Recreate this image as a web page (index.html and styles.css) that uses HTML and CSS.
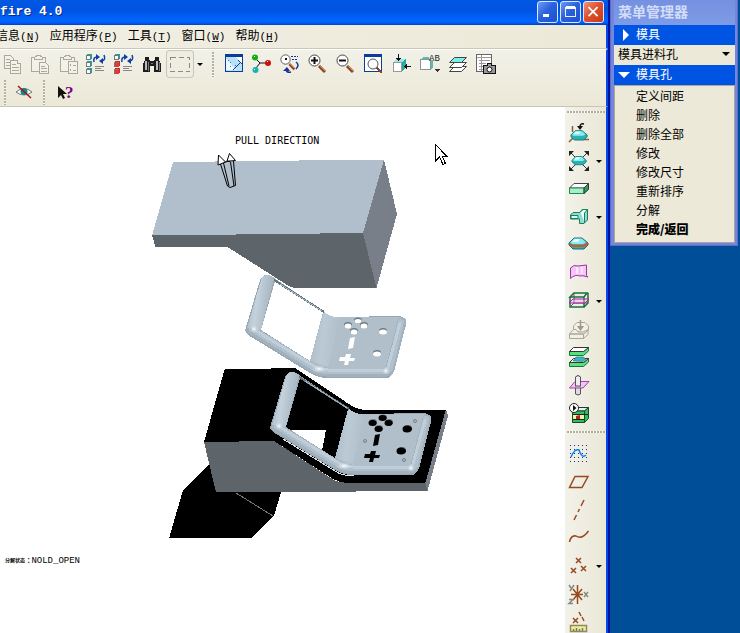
FILE: index.html
```html
<!DOCTYPE html>
<html lang="zh-CN">
<head>
<meta charset="utf-8">
<title>fire 4.0</title>
<link rel="stylesheet" href="styles.css">
</head>
<body>
<svg class="defs" aria-hidden="true">
  <defs>
    <linearGradient id="bar" x1="0" y1="0" x2="1" y2="0.25"><stop offset="0" stop-color="#9fb0bc"/><stop offset=".45" stop-color="#c3d2dc"/><stop offset="1" stop-color="#a3b3bf"/></linearGradient>
    <linearGradient id="fold" x1="0" y1="0" x2="1" y2="0.2"><stop offset="0" stop-color="#a9b8c3"/><stop offset=".5" stop-color="#bccad5"/><stop offset="1" stop-color="#b1bfcb"/></linearGradient>
    <radialGradient id="glow"><stop offset="0" stop-color="#fff"/><stop offset="1" stop-color="#c3d2dc" stop-opacity="0"/></radialGradient>
    <g id="shell">
      <path fill="#98a7b2" fill-rule="evenodd" d="M267 275Q272 275 274 278L323 311Q330 317 337 317L400 316Q407 318 406 325L393 372Q391 378 386 378L327 378Q318 378 310 373L248 335Q244 332 246 327L260 280Q262 275 267 275ZM275 281L261 330L310 361L323 312Z"/>
      <path fill="#b1bfcb" d="M323 312Q330 317 337 317L400 317Q405 318 405 324L392 370Q390 376 386 376H326Q318 376 310 371L310 361Z"/>
      <path fill="url(#fold)" d="M324 312Q331 317 340 318L328 367L310 361Z"/>
      <path fill="none" stroke="#a2b2bd" stroke-width="9" stroke-linecap="round" stroke-linejoin="round" d="M266.500 280L251 330L313 368Q319 372 327 372H386Q389 372 390 369L402 322"/>
      <path fill="none" stroke="#b1c0cc" stroke-width="6" stroke-linecap="round" stroke-linejoin="round" d="M267 280L252 329L313 367Q320 371 327 371H386Q389 371 390 368L401 322"/>
      <path fill="none" stroke="#bfced8" stroke-width="3" stroke-linecap="round" stroke-linejoin="round" d="M267 281L253 329L314 366Q321 370 328 370H386L388 367L400 323"/>
      <path fill="url(#bar)" d="M261 280Q263 275 267 275Q272 275 274 279L261 330L247 328Z"/>
      <path stroke="#647078" stroke-width="2" d="M274 280L324 312"/><path stroke="#a4b2bd" d="M280 284L322 311"/>
      <ellipse cx="254" cy="329" rx="4" ry="4" fill="url(#glow)"/><ellipse cx="319" cy="369" rx="8" ry="4" fill="url(#glow)"/><circle cx="386" cy="371" r="4" fill="url(#glow)"/>
      <g class="smooth" fill="#6d7981" transform="translate(0 -1)"><ellipse cx="358" cy="321" rx="4" ry="2.500"/><ellipse cx="348" cy="326" rx="4" ry="3"/><ellipse cx="364" cy="326" rx="4" ry="3"/><ellipse cx="354" cy="332" rx="4" ry="3"/><ellipse cx="383" cy="332" rx="4" ry="3"/><ellipse cx="377" cy="354" rx="4" ry="3"/></g>
      <g class="smooth" fill="currentColor"><ellipse cx="358" cy="321" rx="3.500" ry="2"/><ellipse cx="348" cy="326" rx="3.500" ry="2.500"/><ellipse cx="364" cy="326" rx="3.500" ry="2.500"/><ellipse cx="354" cy="332" rx="3.500" ry="2.500"/><ellipse cx="383" cy="332" rx="4" ry="2.500"/><ellipse cx="377" cy="354" rx="4" ry="2.500"/><path d="M350 338L355 337L353 348L348 349ZM346 354H351L350 358H355L354 361H349L348 365H344L345 361H339L340 357H345Z"/></g>
    </g>
    <g id="cube"><path fill="#f5fbfb" stroke="#777" d="M.5 1.500H4.500V5.500H.5Z"/><path fill="none" stroke="currentColor" d="M1 .5H5.500V5"/></g>
    <g id="cycle" class="smooth" fill="none" stroke="#0c3fa6" stroke-width="1.500"><path d="M1 9Q0 4 4 4M11 2Q13 7 9 8"/><path fill="#0c3fa6" stroke="none" d="M3 1L7 4L3 7ZM10 5L6 8L10 11Z"/></g>
    <g id="lens"><path stroke="#8a4522" stroke-width="3" d="M11 12L17 18"/><path stroke="#c98a62" d="M11 11L17 17"/><circle cx="6.500" cy="6.500" r="5.500" fill="#fff" stroke="#444"/></g>
    <g id="gem"><path fill="#26b3b3" stroke="#176a70" d="M0 7L5 2H13L19 7V9L15 13H4L0 9Z"/><path fill="#8eeaf0" d="M1 7L5 2.500H13L17 6.500L14 8H3Z"/><path fill="#d9ffff" d="M6 3H11L9 6H3Z"/></g>
  </defs>
</svg>

<main class="app">
  <header class="titlebar">
    <h1>fire 4.0</h1>
    <button class="cap" aria-label="最小化"><svg viewBox="0 0 21 21"><path fill="#fff" d="M5 13H12V16H5Z"/></svg></button>
    <button class="cap" aria-label="最大化"><svg viewBox="0 0 21 21"><path fill="none" stroke="#fff" d="M5.500 5V15.500H15.500V5"/><path fill="#fff" d="M5 4H16V7H5Z"/></svg></button>
    <button class="cap close" aria-label="关闭"><svg class="smooth" viewBox="0 0 21 21"><path stroke="#fff" stroke-width="2" d="M5 5L15 15M15 5L5 15"/></svg></button>
  </header>

  <nav class="menubar">
    <button>信息<span>(<u>N</u>)</span></button>
    <button>应用程序<span>(<u>P</u>)</span></button>
    <button>工具<span>(<u>T</u>)</span></button>
    <button>窗口<span>(<u>W</u>)</span></button>
    <button>帮助<span>(<u>H</u>)</span></button>
  </nav>

  <div class="toolbars">
    <div class="tools first">
      <button class="tool" aria-label="复制"><svg viewBox="-2 50 28 28"><g fill="#f4f2e8" stroke="#aca899"><path d="M4.500 55.500H10.500L13.500 58.500V68.500H4.500Z"/><path d="M10.500 60.500H17.500L20.500 63.500V73.500H10.500Z"/><path d="M6 59.500H10M6 62.500H10M6 65.500H10M12 64.500H16M12 67.500H19M12 70.500H19M17.500 60V63.500H21"/></g></svg></button>
      <button class="tool" aria-label="粘贴"><svg viewBox="26 50 28 28"><g fill="#f4f2e8" stroke="#aca899"><path d="M31.500 57.500H45.500V71.500H31.500Z"/><path d="M34.500 59.500V57.500L37 55.500H40L42.500 57.500V59.500Z"/><path d="M39.500 62.500H45.500L48.500 65.500V73.500H39.500ZM41 66.500H45M41 68.500H47M41 71.500H47"/></g></svg></button>
      <button class="tool" aria-label="选择性粘贴"><svg viewBox="54 50 28 28"><g fill="#f4f2e8" stroke="#aca899"><path d="M60.500 57.500H74.500V71.500H60.500Z"/><path d="M63.500 59.500V57.500L66 55.500H69L71.500 57.500V59.500Z"/><path d="M68.500 61.500H77.500V73.500H68.500ZM70.500 64V66M70.500 69V71M73 65.500H76M73 70.500H76"/></g></svg></button>
      <button class="tool" aria-label="再生"><svg viewBox="82 50 28 28"><g color="#15a2a2"><use href="#cube" x="86" y="54"/><use href="#cube" x="86" y="61"/><use href="#cube" x="86" y="68"/></g><use href="#cycle" x="93" y="53"/><path stroke="#888" d="M95 66.500H104M95 68.500H101M95 70.500H104"/></svg></button>
      <button class="tool" aria-label="再生管理器"><svg viewBox="110 50 28 28"><use href="#cube" x="114" y="54" color="#15a2a2"/><g color="#d22"><use href="#cube" x="114" y="61"/><use href="#cube" x="114" y="68"/><path fill="#e33" d="M115 63H119V67H115ZM115 70H119V74H115Z"/></g><use href="#cycle" x="121" y="53"/><path stroke="#888" d="M123 66.500H132M123 68.500H129M123 70.500H132"/></svg></button>
      <button class="tool" aria-label="查找"><svg viewBox="138 50 28 28"><path fill="#1d1d1d" d="M145 57H149V60L151 61H153L155 60V57H159V60L161 64V72H154V66H150V72H143V64L145 60Z"/><path stroke="#bbb" stroke-width="2" d="M146 61V70M157 61V70"/><path stroke="#777" d="M148.500 62V71M159.500 62V71M151 63.500H153"/></svg></button>
      <button class="tool on" aria-label="选取框"><svg viewBox="166 50 28 28"><path fill="none" stroke="#8d8a80" stroke-dasharray="5 3" d="M170.500 57.500H189.500V71.500H170.500Z"/></svg></button>
      <button class="fly" aria-label="选取选项"></button>
      <i class="grip"></i>
      <button class="tool" aria-label="重画"><svg viewBox="220 50 28 28"><path fill="#fff" stroke="#0a3c9c" d="M225.500 54.500H242.500V71.500H225.500Z"/><path fill="#0a3c9c" d="M225 54H243V57H225Z"/><path fill="#b9e0f5" d="M226 57H235L242 64V71H226Z"/><path fill="#eefaff" d="M226 58L236 70H226Z"/><path stroke="#246fc0" stroke-dasharray="1 2" d="M228 60L237 67M230 66L235 69"/><path stroke="#0a3c9c" d="M240 63L233 70M238 60L242 64"/></svg></button>
      <button class="tool" aria-label="旋转中心"><svg class="smooth" viewBox="248 50 28 28"><path fill="none" stroke="#111" d="M256 59L260 63H267M260 63L256 68"/><circle cx="255" cy="57.500" r="3" fill="#10b010"/><circle cx="268" cy="63" r="3" fill="#d01010"/><circle cx="255.500" cy="70" r="3" fill="#18b4b4"/><path fill="#fff" d="M254 56h1v1h-1zM267 61h1v1h-1zM254 69h1v1h-1z"/></svg></button>
      <button class="tool" aria-label="定向模式"><svg class="smooth" viewBox="276 50 28 28"><use href="#lens" transform="translate(280 54) scale(.85)"/><path stroke="#1b2f9c" stroke-dasharray="2 1" d="M291 56.500H298M292 59.500H298"/><path fill="none" stroke="#1b2f9c" stroke-width="1.500" d="M296 62Q300 65 296 69M291 72Q286 73 286 69"/><path fill="#1b2f9c" d="M283 71L287 67L290 71Z"/><path fill="#111" d="M285 58h2v2h-2z"/></svg></button>
      <button class="tool" aria-label="放大"><svg class="smooth" viewBox="304 50 28 28"><use href="#lens" x="308" y="54"/><path stroke="#111" stroke-width="2" d="M311 60.500H318M314.500 57V64"/></svg></button>
      <button class="tool" aria-label="缩小"><svg class="smooth" viewBox="332 50 28 28"><use href="#lens" x="336" y="54"/><path stroke="#111" stroke-width="2" d="M339 60.500H346"/></svg></button>
      <button class="tool" aria-label="重新调整"><svg viewBox="360 50 28 28"><path fill="#fff" stroke="#0a3c9c" d="M364.500 54.500H381.500V71.500H364.500Z"/><path fill="#0a3c9c" d="M364 54H382V57H364Z"/><path stroke="#8a4522" stroke-width="2" d="M376 67L382 73"/><circle class="smooth" cx="373" cy="64" r="5" fill="#fff" stroke="#555"/></svg></button>
      <button class="tool" aria-label="重定向"><svg viewBox="388 50 28 28"><path fill="#25aaa6" d="M396 59H405L402 62V71L406 68V59Z"/><path fill="#9de7e6" d="M396 59H405L402 63H393Z"/><path fill="#fff" stroke="#999" d="M393.500 62.500H401.500V71.500H393.500Z"/><path stroke="#111" d="M398.500 54V60M405 66.500H411"/><path fill="#111" d="M396 58H401L398.500 61ZM407 64V69L404 66.500Z"/></svg></button>
      <button class="tool" aria-label="保存的视图列表"><svg viewBox="416 50 28 28"><path fill="#54bcb9" d="M420 60L423 57H429V60ZM430 60L433 60V67L430 70Z"/><path fill="#fff" stroke="#8e9494" d="M420.500 59.500H430.500V69.500H420.500Z"/><text x="429" y="61" class="ab">AB</text><path fill="#333" d="M435 69H440L437.500 72Z"/></svg></button>
      <button class="tool" aria-label="图层"><svg class="smooth" viewBox="444 50 28 28"><g stroke="#444"><path fill="#fff" d="M449.500 71.500L454.500 66.500H466.500L461.500 71.500Z"/><path fill="#fff" d="M449.500 67.500L454.500 62.500H466.500L461.500 67.500Z"/><path fill="#7beeea" d="M449.500 62.500L454.500 57.500H466.500L461.500 62.500Z"/></g></svg></button>
      <button class="tool" aria-label="视图管理器"><svg viewBox="472 50 28 28"><path fill="#fff" stroke="#666" d="M476.500 54.500H491.500V71.500H476.500Z"/><path stroke="#999" d="M477 57.500H491M479 60.500H490M479 63.500H486M479 66.500H484M479 69.500H484M481.500 55V71"/><path fill="#999" stroke="#111" d="M483.500 65.500H487L488 63.500H491L492 65.500H495.500V73.500H483.500Z"/><circle class="smooth" cx="489.500" cy="69.500" r="2.500" fill="#fff" stroke="#111"/></svg></button>
    </div>
    <div class="tools second">
      <i class="grip"></i>
      <button class="tool" aria-label="遮蔽"><svg class="smooth" viewBox="11 78 28 28"><path fill="#fff" stroke="#777" d="M16 92Q24 85 32 92Q24 98 16 92Z"/><circle cx="24" cy="91.500" r="3.500" fill="#13878c"/><path stroke="#a01818" stroke-width="1.500" d="M18 86L31 98"/></svg></button>
      <i class="grip"></i>
      <button class="tool" aria-label="上下文帮助"><svg class="smooth" viewBox="50 77 28 28"><path fill="#111" d="M58 85V97L61 94L63 98L65 97L63 93H67Z"/><text x="65" y="97" class="help">?</text></svg></button>
    </div>
  </div>

  <div class="work">
    <svg class="scene" viewBox="0 107 565 526" preserveAspectRatio="xMinYMin meet" role="img" aria-label="模具打开视图">
      <text x="235" y="144" class="note">PULL DIRECTION</text>
      <path fill="#b1becb" d="M173 162L384 159.500L363 233L152 235.500Z"/>
      <path fill="#787f89" d="M384 159.500L397 214L376.500 288L363 233Z"/>
      <path fill="#5e656a" d="M152 235.500L363 233L376.500 288H295Q289 287 284 283L227.500 247H155.500Z"/>
      <g class="smooth" fill="none" stroke="#000"><path d="M220.500 164L227.500 186L230 187.500L235.500 185.500L233.500 161M223.500 163L229 186M230.500 162L234 186M223 163L227 161.500H230"/><path fill="#fff" d="M218 165L218.500 155L225.500 162ZM227 161L229.500 153.500L235.500 160.500L230 161Z"/></g>
      <path fill="#fff" stroke="#000" d="M435.500 144.500V161L439.500 157L443 164.500L445.500 163.500L442 156H446.500Z"/>
      <use href="#shell" color="#fff"/>
      <path fill="#000" d="M209 465L183 490L169 538.500L252 537.500L274 516L281 492Z"/>
      <path stroke="#777" d="M236 493L273 516"/>
      <path fill="#000" d="M224.500 369.500L295 368L348 403.500Q357 410 367 410L446 409.500L426 482.500H342L333 479L274 441L204 442Z"/>
      <path fill="#5e656a" d="M204 442L274 441L330 477.500Q337 482.500 344 482.500H426L427 491L216 492.500Z"/>
      <path fill="#787f89" d="M446 409L448 416L427.500 491L425.500 482.500Z"/>
      <path fill="#fff" d="M283 430H326L321.500 453L315 452Z"/>
      <path fill="none" stroke="#dde5ea" d="M283 439L335 471Q342 476 354 476"/>
      <use href="#shell" x="25" y="97" color="#000"/>
      <g class="smooth" fill="#000"><ellipse cx="382.500" cy="418" rx="4" ry="3"/><ellipse cx="372.500" cy="423" rx="4" ry="3"/><ellipse cx="388.500" cy="423" rx="4" ry="3"/><ellipse cx="378.500" cy="429" rx="4" ry="3"/><ellipse cx="407" cy="429" rx="4.500" ry="3.500"/><ellipse cx="401" cy="451" rx="4.500" ry="3.500"/></g>
      <g class="smooth" fill="none" stroke="#74818a"><circle cx="415" cy="421" r="1.500"/><circle cx="365" cy="441" r="1.500"/><circle cx="404" cy="460" r="1.500"/></g>
      <text x="5" y="562" class="state">分解状态</text><text x="26" y="563" class="statename">:NOLD_OPEN</text>
    </svg>

    <div class="rail">
      <i class="grip flat"></i>
      <button class="tool" aria-label="定位参照零件"><svg class="smooth" viewBox="565 119 28 28"><path stroke="#8d5b32" stroke-width="1.500" d="M572.500 126V132M569 142L574 137M583 139.500H589"/><use href="#gem" transform="translate(571 129) scale(.85)"/><path fill="none" stroke="#111" stroke-width="1.500" d="M584 124Q580 123 580 127"/><path fill="#111" d="M577 126H583L580 130Z"/></svg></button>
      <button class="tool" aria-label="按比例收缩"><svg class="smooth" viewBox="565 147 28 28"><path stroke="#333" d="M570 152L588 170M588 152L570 170"/><path fill="#222" d="M569 151H574L569 156ZM589 151V156L584 151ZM569 171V166L574 171ZM589 171H584L589 166Z"/><use href="#gem" transform="translate(572 155) scale(.75)"/></svg></button><button class="fly" aria-label="收缩选项"></button>
      <button class="tool" aria-label="自动工件"><svg class="smooth" viewBox="565 175 28 28"><path fill="#fff" stroke="#444" d="M569.500 188L574 183.500H588.500L584 188Z"/><path fill="#a5f0c4" stroke="#218b57" d="M569.500 188H584V193.500H569.500Z"/><path fill="#299e60" stroke="#333" d="M584 188L588.500 183.500V189.500L584 193.500Z"/></svg></button>
      <button class="tool" aria-label="体积块"><svg class="smooth" viewBox="565 203 28 28"><g stroke="#188055"><path fill="#8ddcd7" d="M570.500 215L573 212.500H580L582 209.500H587.500V220L584 223.500H579.500V219H570.500Z"/><path fill="#e4ffff" d="M580.500 212L583 209.500H587.500L584.500 213V223M571 215.500H578V218.500H571Z"/></g></svg></button><button class="fly" aria-label="体积块选项"></button>
      <button class="tool" aria-label="轮廓曲线"><svg class="smooth" viewBox="565 231 28 28"><use href="#gem" x="569" y="236"/><path fill="none" stroke="#f04818" stroke-width="2" d="M570 244L573 246H584L588 243"/></svg></button>
      <button class="tool" aria-label="分型面"><svg class="smooth" viewBox="565 259 28 28"><path fill="#f4c6f4" stroke="#a030b0" d="M570.500 278.500V268Q574 264 578 266L586.500 265V275.500L588 277Q582 275 580 276Q575 274 570.500 278.500Z"/><path stroke="#fbe8fb" stroke-width="2" d="M577 267V274M582 267V274"/></svg></button>
      <button class="tool" aria-label="分割体积块"><svg class="smooth" viewBox="565 287 28 28"><path fill="none" stroke="#15703c" stroke-width="1.500" d="M570 297L574 293H587L584 297ZM570 297V307H584V297M584 307L588 303V293"/><path fill="none" stroke="#555" d="M574 293V303H588M574 303L570 307"/><path fill="#e8b0e8" fill-opacity=".4" stroke="#b020b0" d="M569 303L573 299H589L585 303Z"/></svg></button><button class="fly" aria-label="分割选项"></button>
      <button class="tool" aria-label="型腔插入"><svg class="smooth" viewBox="565 315 28 28"><g fill="#f2f0e5" stroke="#aaa697"><path d="M573.500 331V326L577 322.500H585L588.500 326V330L585 333Z"/><path d="M569.500 334L573.500 329.500H576L578 332H583L588.500 329.500L583.500 334ZM569.500 334H583.500V338.500H569.500ZM583.500 338.500L588 334.500V330"/></g><path stroke="#9c998d" stroke-width="1.500" d="M580.500 320V329"/><path fill="#9c998d" d="M577 326H584L580.500 331Z"/></svg></button>
      <button class="tool" aria-label="模具开模"><svg class="smooth" viewBox="565 343 28 28"><path fill="#59df7b" stroke="#174" d="M569.500 351.500V355.500H583.500L588.500 351V347.500L583.500 351.500ZM569.500 362.500V366.500H583.500L588.500 362V358.500L583.500 362.500Z"/><path fill="#fff" stroke="#333" d="M569.500 351.500L573.500 347.500H588.500L583.500 351.500ZM569.500 362.500L573.500 358.500H588.500L583.500 362.500Z"/><path fill="#38b8bd" stroke="#246" stroke-width=".5" d="M573 361L576 357H583L586 359L583 361.500Z"/></svg></button>
      <button class="tool" aria-label="修剪到几何"><svg class="smooth" viewBox="565 371 28 28"><path fill="#ddd" stroke="#555" d="M575.500 377Q578 374 580.500 377V394Q578 396 575.500 394Z"/><path fill="#f0b5f2" fill-opacity=".7" stroke="#a83ab8" d="M569.500 388L575 381.500H589L583 388Z"/><path fill="#eee" stroke="#555" d="M575.500 377V386H580.500V377Q578 374 575.500 377Z"/></svg></button>
      <button class="tool" aria-label="开模分析"><svg class="smooth" viewBox="565 399 28 28"><path fill="#eee" stroke="#333" d="M572.500 411L576 407.500H588.500L584.500 411Z"/><path fill="#2dbf64" stroke="#154b2c" d="M572.500 411H584.500V422.500H572.500ZM584.500 411L588.500 407.500V418.500L584.500 422.500Z"/><path fill="#f4f29b" d="M573 414H584V419H573Z"/><path fill="#b52222" d="M576 419V416L580 415V419Z"/><path stroke="#222" d="M573 414.500H588M573 419.500H584"/><circle cx="574" cy="408" r="4.500" fill="#fff" stroke="#222"/><path fill="#111" d="M573 405V411L576.500 408Z"/></svg></button>
      <i class="grip flat"></i>
      <button class="tool" aria-label="草绘"><svg class="smooth" viewBox="565 440 28 28"><path stroke="#10338c" stroke-dasharray="1 3" d="M570 445.500H588M570 449.500H588M570 453.500H588M570 457.500H588M570 461.500H588"/><path fill="none" stroke="#0b83f0" stroke-width="1.500" d="M571 457Q575 448 579 450Q582 459 586 455"/></svg></button>
      <button class="tool" aria-label="基准平面"><svg class="smooth brown" viewBox="565 468 28 28"><path d="M569.500 487.500L575 476.500H588L582 487.500Z"/></svg></button>
      <button class="tool" aria-label="基准轴"><svg class="smooth brown" viewBox="565 496 28 28"><path d="M584 500L581 506M579.500 509L578 512M576.500 515L574 520"/></svg></button>
      <button class="tool" aria-label="基准曲线"><svg class="smooth brown" viewBox="565 524 28 28"><path d="M569.500 542Q571 535 576 536Q582 540 588.500 531"/></svg></button>
      <button class="tool" aria-label="基准点"><svg class="smooth brown" viewBox="565 552 28 28"><path d="M576 558L581 563M581 558L576 563M571 568L576 573M576 568L571 573M581 566L586 571M586 566L581 571"/></svg></button><button class="fly" aria-label="基准点选项"></button>
      <button class="tool" aria-label="坐标系"><svg class="smooth brown" viewBox="565 580 28 28"><path d="M577.500 585V604M571 594.500H583M573 589L582 600M582 589L573 600"/><path stroke="#888" d="M569 585L571 588M574 585L570 591M584 592L588 597M588 592L584 597M569 599.500H573L569 603.500H573"/></svg></button>
      <button class="tool" aria-label="分析"><svg class="smooth brown" viewBox="565 608 28 28"><path d="M573 618L578 623M578 618L573 623M579 612L581 616M582 617L584 621"/><path fill="#f1ed91" stroke="#8b8b62" d="M570.500 625.500H586.500V631.500H570.500Z"/><path stroke="#777" d="M573.500 629V631M576.500 628V631M579.500 629V631M582.500 628V631"/></svg></button>
    </div>
  </div>
</main>

<aside class="desk">
  <section class="manager">
    <h2>菜单管理器</h2>
    <button class="head"><i class="tri right"></i>模具</button>
    <div class="pick"><select aria-label="模具菜单"><option>模具进料孔</option></select><i></i></div>
    <button class="head"><i class="tri down"></i>模具孔</button>
    <div class="list">
      <button>定义间距</button>
      <button>删除</button>
      <button>删除全部</button>
      <button>修改</button>
      <button>修改尺寸</button>
      <button>重新排序</button>
      <button>分解</button>
      <button class="strong">完成/返回</button>
    </div>
  </section>
</aside>
</body>
</html>
```
FILE: styles.css
```css
* { box-sizing: border-box; }

body {
  margin: 0;
  display: flex;
  min-height: 100vh;
  overflow: hidden;
  background: #004e98;
  font: 12px/18px "Noto Sans CJK SC", sans-serif;
  color: #000;
}

button, select {
  font: inherit;
  color: inherit;
  margin: 0;
  padding: 0;
  border: 0;
  background: none;
}

svg { display: block; shape-rendering: crispEdges; fill: none; }
.smooth { shape-rendering: auto; }
.defs { position: absolute; width: 0; height: 0; }

/* application window */
.app {
  flex: 1;
  min-width: 0;
  height: 100vh;
  display: flex;
  flex-direction: column;
  overflow: hidden;
  border-right: 2px solid #00139c;
  background: #ece9d8;
}

.titlebar {
  flex: none;
  height: 25px;
  display: flex;
  gap: 2px;
  padding: 1px 4px 0 0;
  background: linear-gradient(#0058e4 0, #0052e0 40%, #0062fa 75%, #0064ff 88%, #0040c8 100%);
}

.titlebar h1 {
  flex: 1;
  margin: 0;
  font: bold 13px/22px "Liberation Mono", monospace;
  color: #fff;
  text-shadow: 1px 1px #0a2a80;
}

.cap {
  width: 21px;
  height: 22px;
  border: 1px solid #dfe8fb;
  border-radius: 3px;
  background: linear-gradient(135deg, #6d9bf3, #2a62dc 45%, #1c50cf);
}
.cap svg { width: 19px; height: 20px; }
.cap.close { background: linear-gradient(135deg, #ee9678, #df5030 45%, #c83a15); }

.menubar {
  flex: none;
  height: 24px;
  display: flex;
  gap: 10px;
  padding-bottom: 2px;
  margin-left: -4px;
  border-right: 2px solid #0846e6;
  border-bottom: 1px solid #cbc8b6;
  background: linear-gradient(90deg, #f1efe4, #ece9d8);
}
.menubar button { flex: none; white-space: nowrap; }
.menubar span { font: 11px/18px "Liberation Mono", monospace; }

.toolbars {
  flex: none;
  height: 58px;
  border-top: 1px solid #fff;
  border-right: 2px solid #0846e6;
  border-bottom: 1px solid #c9c6b5;
  background: linear-gradient(#f2f1e8, #ebe8d6);
}
.tools { display: flex; align-items: center; height: 28px; }
.tools.first { margin-left: -2px; }
.tools.second { padding-left: 4px; }
.tools.second .grip { margin: 0 5px 0 0; }
.tools.second .tool + .grip { margin: 0 5px 0 4px; }

.tool { flex: none; width: 28px; height: 28px; }
.tool svg { width: 28px; height: 28px; }
.tool.on { border-radius: 4px; background: #efede2; box-shadow: inset 0 0 0 1px #c9c6b8; }
.help { font: bold 17px "Liberation Serif", serif; fill: #800080; }
.ab { font: 9px "Liberation Mono", monospace; fill: #222; }
.brown { stroke: #97491f; stroke-width: 1.5; }

.fly { width: 12px; height: 28px; display: grid; place-items: center; }
.fly::before, .pick i {
  content: "";
  border: 3px solid transparent;
  border-top-color: #000;
  border-bottom: 0;
}

.grip {
  flex: none;
  width: 2px;
  height: 25px;
  margin: 0 6px;
  background: repeating-linear-gradient(#b3b0a4 0 2px, #f8f7f2 2px 3px);
}

/* work area */
.work { flex: 1; min-height: 0; display: flex; border-right: 2px solid #0846e6; background: #fff; }
.scene { flex: 1; min-width: 0; align-self: flex-start; }
.scene text { fill: #000; }
.note { font: 10px "DejaVu Sans Mono", monospace; }
.state { font: 5px "Noto Sans CJK SC", sans-serif; font-weight: 700; }
.statename { font: 9px "Liberation Mono", monospace; }

.rail {
  flex: none;
  width: 41px;
  display: grid;
  grid-template-columns: 28px 12px;
  grid-auto-rows: 28px;
  grid-template-rows: 12px repeat(11, 28px) 13px;
  background: linear-gradient(90deg, #f3f2ea, #eae7d6);
}
.rail .tool { grid-column: 1; }
.rail .fly { grid-column: 2; }
.grip.flat {
  grid-column: 1 / -1;
  width: auto;
  height: 2px;
  margin: 4px 0 0 2px;
  background: repeating-linear-gradient(90deg, #b3b0a4 0 2px, #f8f7f2 2px 3px);
}

/* menu manager */
.desk { flex: none; width: 130px; padding-right: 2px; }
.manager {
  display: flex;
  flex-direction: column;
  padding: 0 3px 3px 4px;
  background: #7486dc;
  box-shadow: inset 1px 0 #5b6cc4, inset -1px -1px #5b6cc4;
}
.manager h2 {
  height: 25px;
  margin: 0;
  padding-left: 4px;
  font-size: 14px;
  line-height: 22px;
  color: #d3ddf8;
  background: linear-gradient(#7590e0, #7d9ce6);
}
.head {
  height: 20px;
  display: flex;
  align-items: center;
  padding-bottom: 2px;
  text-align: left;
  color: #fff;
  background: #0054e3;
}
.tri { flex: none; width: 22px; display: grid; place-items: center start; padding: 2px 0 0 4px; }
.tri::before { content: ""; border: 6px solid transparent; }
.tri.right { padding-left: 9px; }
.tri.right::before { border-left-color: #fff; border-right: 0; }
.tri.down::before { border-top-color: #fff; border-bottom: 0; }

.pick { height: 20px; display: flex; align-items: center; padding: 0 5px 2px 4px; background: #ece9d8; }
.pick select { flex: 1; min-width: 0; appearance: none; }
.pick i { border-width: 4px 4px 0; }

.list {
  display: flex;
  flex-direction: column;
  padding: 1px 0 3px;
  border: 1px solid #aca899;
  background: #ece9d8;
}
.list button { height: 19px; padding: 0 0 1px 21px; text-align: left; }
.list .strong { font-weight: 900; }
```
